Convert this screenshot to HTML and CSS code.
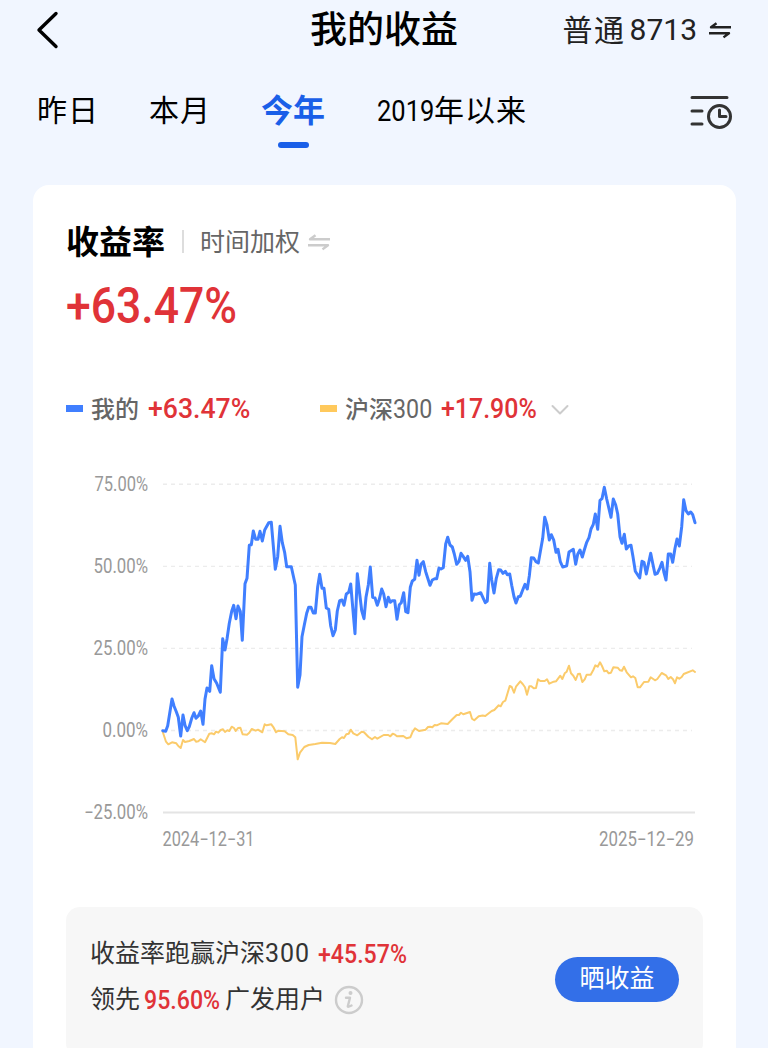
FILE: index.html
```html
<!DOCTYPE html>
<html lang="zh-CN">
<head>
  <meta charset="UTF-8" />
  <meta name="viewport" content="width=device-width, initial-scale=1.0"/>
  <title>我的收益</title>
  <link rel="stylesheet" href="styles.css">
</head>
<body>
  <header>
    <a class="back" aria-label="返回">
      <svg width="24" height="40" viewBox="0 0 24 40"><path d="M21 3.500 L4 20 L21 36.500"/></svg>
    </a>
    <h1>我的收益</h1>
    <div class="account">
      <span class="account-type">普通</span>
      <span class="account-no">8713</span>
      <svg class="swap" width="24" height="18" viewBox="0 0 24 18"><path d="M23 6.300H3L8.500 2.200M1 12.300H21L15.500 16.400"/></svg>
    </div>
  </header>

  <nav>
    <ul>
      <li>昨日</li>
      <li>本月</li>
      <li class="active">今年</li>
      <li class="since"><span class="num">2019</span>年以来</li>
    </ul>
    <svg class="history" width="44" height="36" viewBox="0 0 44 36">
      <path d="M3 3.500H38M3 17H13M3 30H13"/>
      <circle cx="30.500" cy="22.500" r="11"/>
      <path d="M30.500 16V22.500H37"/>
    </svg>
  </nav>

  <main class="card">
    <div class="card-title">
      <h2>收益率</h2>
      <span class="divider"></span>
      <span class="method">时间加权</span>
      <svg class="swap" width="24" height="18" viewBox="0 0 24 18"><path d="M23 6.300H3L8.500 2.200M1 12.300H21L15.500 16.400"/></svg>
    </div>

    <div class="total"><span class="num">+63.47%</span></div>

    <div class="legend">
      <div class="legend-item mine">
        <i class="mark"></i>
        <span class="name">我的</span>
        <span class="num">+63.47%</span>
      </div>
      <div class="legend-item index">
        <i class="mark"></i>
        <span class="name">沪深<b class="num">300</b></span>
        <span class="num rate">+17.90%</span>
        <svg class="chevron" width="18" height="12" viewBox="0 0 18 12"><path d="M1.500 2L9 9.500L16.500 2"/></svg>
      </div>
    </div>

    <svg class="chart" width="636" height="390" viewBox="66 470 636 390">
      <!-- grid -->
      <g class="grid">
        <path d="M163 484.200H692M163 566.400H692M163 648.400H692M163 730.500H692"/>
      </g>
      <path class="axis" d="M163 812.500H695"/>

      <!-- y axis -->
      <g class="label">
        <text x="94.500" y="490.500" textLength="53.500" lengthAdjust="spacingAndGlyphs">75.00%</text>
        <text x="93.500" y="572.700" textLength="54.500" lengthAdjust="spacingAndGlyphs">50.00%</text>
        <text x="93.500" y="654.700" textLength="54.500" lengthAdjust="spacingAndGlyphs">25.00%</text>
        <text x="102.500" y="736.800" textLength="45.500" lengthAdjust="spacingAndGlyphs">0.00%</text>
        <text x="84" y="818.800" textLength="64" lengthAdjust="spacingAndGlyphs">−25.00%</text>
        <!-- x axis -->
        <text x="162.500" y="845.500" textLength="92" lengthAdjust="spacingAndGlyphs">2024−12−31</text>
        <text x="599" y="845.500" textLength="95" lengthAdjust="spacingAndGlyphs">2025−12−29</text>
      </g>

      <polyline class="line-index" points="162.7,731.7 166,741.7 168.3,744.3 172,742.3 176.3,743.3 178.3,746 180.7,748 183,740 185,742 189.3,741 194,739 196,741.7 198.3,741.3 200.7,739.3 205,742.3 209.3,733.7 212,733.3 214,734.3 216,731.7 218.3,732.7 220.7,730 223,729.3 225,732 227.3,730.3 229.3,731 231.7,726.7 234,728 235.7,731 238,728 240.3,727.7 242.7,734.3 247,734.7 249.3,732.7 251.7,729 255.7,730.7 258,729.7 262.3,732.3 264.7,724.3 266.7,725.3 271.3,724.3 273.7,727.7 276,732.3 278.3,730.7 284.7,731.3 288.3,734.3 292.7,735 295.3,737.3 297.7,759.3
        300,752.7 304.3,747 308.7,745 315.3,744 322,742.7 330,743 335.3,744 339.7,739 342,737.3 344,738 346.3,734.3 348.7,733.7 350.7,729.7 353.3,733.3 357.3,735.3 361.7,731.7 364,732.3 368.3,736.7 372,739.3 375,737 377.3,738.7 383.7,735 388.3,735 390.3,736.3 392.7,733.7 395,734.7 397,736.3 403.3,736 406.7,738.3 410.3,737.3 412.7,731.7 415,728.3 419,731 425.7,729.7 428,727 430,726.7 432.3,727.3 434.7,725 436.7,725.3 441,723.3 447.7,724 452.3,719.3 456.7,715 459,715 461,712.7 463.3,714.3 470,712 472,718.7 474.3,720.3 478.7,716.3 482.7,715.5 485.3,716
        491.7,711 494.3,710 498.7,705.3 500.7,706.3 503,702 505.3,700.7 509.7,686 511.7,687 514,692.7 516,686.7 520.3,681.3 522.7,684 525,687.3 527,694.7 529.3,686.3 531.3,686.3 533.7,688.3 536,688 538,679.3 540.3,681 544.7,681 547,679.3 549.3,683.7 553.7,681.7 556,681.3 560.3,675.7 562.3,679 564.7,673.3 566.7,671.7 569,665.7 571,673.3 573.3,675.7 575.7,680 578,674 580,673.7 582.3,682 584.7,679.3 586.7,674.7 590.7,674.7 593.3,670 595.3,665.3 597.7,666.7 600,662.3 602,666 604.3,671.3 606.7,670.7 608.7,673.3 611,672.7 613.3,667.3 617.7,667.7 620,670.3 622,670.7 624,666.7 626.7,672.3 631,677.3 633,676.3 635.3,678 637.7,687.3 640,687.3 644,682 648.3,681.7 650.7,677.3 655,680.3 657.3,679 661.7,673 666,675.3 668.3,679 670.7,677 673,679.3 675,683.3 677,677.3 679.3,678.7 681.7,677 683.7,674 692.7,670.3 695,672"/>

      <polyline class="line-mine" points="162.7,730.7 165.7,731.3 167.7,725.7 172,699 174,706 176.3,711.7 178.3,717.3 180.7,736 183,715 185,725.3 187.3,730.7 189.3,726.7 191.7,718.3 194,712.7 196,718.3 198.3,716 200.7,711 203,724.3 205,699 207,688 209.7,691.3 211.7,665.7 214,678.7 216.7,683.3 220.3,692.3 222.7,638.7 225,650 227,639 229.3,623.3 231.7,611.3 233.7,605.3 236,618.7 238,606 240.3,611.3 242.3,640.3 245,583.7 247,578.3 249.3,545.3 251.3,544.7 253.3,531 255.7,539.3 258,539.3 260,531.3 262.3,541 264.7,530 268.7,522.7 271.3,522.3 275.3,569.3 277.7,556.7 280,526.3 282.3,542.7 284.7,552.7 286.7,566.7 291.3,566.7 295.3,585 297.7,687.3
        300,675 302,636.7 304.3,625 306.7,613.3 308.7,607.3 311,607.3 313.3,613 315.3,613 317.7,586.7 319.7,574.3 322,588.3 324,588.3 326.3,608 328.7,609.3 330.7,626 333,635.7 335.3,630 337.3,611 339.7,600.7 342,600 344,605.3 346.3,594 348.7,592.3 350.7,584 355,633.7 357.3,573.7 359.7,594 361.7,610.7 364,618.7 366,597.3 368.3,585 370.3,567 372.7,597.3 375,598 377.3,605.3 379.3,599.3 381.7,589 383.7,594 386,606.7 388.3,597.3 390.3,602.3 392.3,600.7 394.7,600.7 397,619.3 399.3,604.7 401.3,602.7 403.7,592.7 405.7,611.7 408,612.7 410.3,587.3 412.3,581 414.7,579.3 417,560.3 419,575.3 421,564.3 423.3,561.7 425.7,571.7 430,585.3 432.3,580 434.7,578.7 436.7,578.7 439,568 441,569 443.3,567.7 445.7,544 447.7,537.3 450,545 452.3,547 454.3,554 456.7,564.3 459,561.3 461,553.3 463.3,556.7 465.7,560.3 467.7,556.3 470,571.7 472,600.3 474,594 476.3,594.3 480.7,592.7 483.3,598.3 485.3,602.7 487.3,601
        489.7,563.3 491.7,580 494,593 496.3,578.3 498.7,569.7 500.7,570 503,573.3 505.3,571.3 507.3,574.7 509.7,574 511.7,585.3 514,596.7 516,603 518.3,596.7 520.3,596.3 522.7,590 525,584.3 527.3,589 529.3,576 531.3,557.7 533.7,558 536,561.7 538.3,563 540.3,551.7 542.7,538.3 544.7,517.3 547,525 549.3,540 551.3,534.7 553.7,540 556,552.3 558,549.3 560.3,561.7 562.7,567 566.7,565.7 569,552 573.3,549.3 575.7,564.3 577.7,554.3 580,550 582.3,557 584.3,550 586.7,542.3 589,537.7 591,529 593.3,524.3 595.3,514 597.7,529.3 600,500.3 602,498.7 604.3,487.3 606.7,499 611,517.3 613.3,499 615.7,505 617.7,514 620,536.7 622,543.3 624.3,534.3 626.3,549 628.7,546 631,545.3 633,556.7 635.3,571.3 639.7,578 642,561.3 644,562.3 646.3,574 650.7,553.3 652.7,563.3 655,574.3 657.3,573.3 659.7,568.3 662,562.3 664,572.7 666,580 668.3,554 670.7,554 672.7,562.3 675,548.3 677,539 679.3,546 681.7,526.7 683.7,499.7 686,510.7 688.3,514 690.7,512 692.7,514.7 695,522.7"/>
    </svg>

    <section class="summary">
      <div class="summary-text">
        <p><span>收益率跑赢沪深<b class="digits">300</b></span><span class="num beat">+45.57%</span></p>
        <p>
          <span>领先</span><span class="num rank">95.60%</span><span>广发用户</span>
          <svg class="info" width="30" height="30" viewBox="0 0 30 30">
            <circle cx="15" cy="15" r="13"/>
            <circle class="dot" cx="16.500" cy="8" r="2"/>
            <path d="M12 12.800H16L13.800 21.200Q13.800 22.500 17.500 20.500"/>
          </svg>
        </p>
      </div>
      <button>晒收益</button>
    </section>
  </main>
</body>
</html>
```
FILE: styles.css
```css
* {
  margin: 0;
  padding: 0;
  box-sizing: border-box;
}

body {
  width: 768px;
  height: 1048px;
  overflow: hidden;
  background: #f1f6ff;
  color: #000;
  font-family: Roboto, "Noto Sans CJK SC", sans-serif;
}

svg {
  display: block;
  flex: none;
  fill: none;
  stroke-linecap: round;
  stroke-linejoin: round;
}

/* Narrow digits, every use sets its own width and --sx */
.num {
  display: inline-block;
  white-space: nowrap;
  transform: scaleX(var(--sx));
  transform-origin: left center;
}

/* Top bar */
header {
  display: grid;
  grid-template-columns: 1fr auto 1fr;
  align-items: center;
  height: 58px;
  padding: 0 36px 0 35px;
}
.back svg {
  stroke: #000;
  stroke-width: 3.4;
}
h1 {
  padding: 3px 0 0 1px;
  font-size: 37px;
  font-weight: 500;
  line-height: 56px;
}
.account {
  display: flex;
  align-items: center;
  justify-content: flex-end;
  color: #222;
  font-size: 30px;
  line-height: 56px;
}
.account-type {
  padding-top: 3px;
  letter-spacing: 1.5px;
  margin-right: 4px;
}
.account-no {
  padding-top: 1px;
  margin-right: 11px;
}
.swap {
  stroke: #222;
  stroke-width: 2.4;
  stroke-linecap: butt;
}

/* Tabs */
nav {
  display: flex;
  justify-content: space-between;
  padding: 31px 35px 0 37px;
  height: 127px;
}
nav ul {
  display: flex;
  list-style: none;
  font-size: 30px;
  line-height: 44px;
}
nav li {
  width: 112px;
  letter-spacing: 1px;
  white-space: nowrap;
}
nav .active {
  width: 116px;
  color: #1a5fe8;
  font-size: 32px;
  font-weight: 700;
  letter-spacing: 0;
}
nav .active::after {
  content: "";
  display: block;
  width: 31px;
  height: 6px;
  margin: 9px 0 0 17px;
  border-radius: 3px;
  background: #1a5fe8;
}
.since .num {
  --sx: 0.85;
  width: 57px;
  letter-spacing: 0;
}
.history {
  margin-top: 5px;
  stroke: #333;
  stroke-width: 3;
}

/* Card */
.card {
  width: 703px;
  height: 900px;
  margin-left: 33px;
  padding: 33px 33px 0;
  border-radius: 16px;
  background: #fff;
}
.card-title {
  display: flex;
  align-items: center;
  height: 46px;
}
h2 {
  padding-top: 3px;
  font-size: 33px;
  font-weight: 700;
  line-height: 46px;
}
.divider {
  width: 2px;
  height: 23px;
  margin: 0 16px 0 17px;
  background: #ddd;
}
.method {
  padding-top: 3px;
  color: #666;
  font-size: 25px;
  line-height: 46px;
}
.card-title .swap {
  margin: 2px 0 0 7px;
  stroke: #ccc;
}
.total {
  height: 84px;
  color: #e03338;
  font-size: 50px;
  font-weight: 500;
  line-height: 84px;
}
.total .num {
  --sx: 0.89;
}

/* Legend */
.legend {
  display: flex;
  height: 44px;
  margin-top: 38px;
}
.legend-item {
  display: flex;
  align-items: center;
  font-size: 24px;
  line-height: 44px;
}
.mine {
  width: 254px;
}
.mark {
  width: 17px;
  height: 7px;
  margin-top: 1px;
  margin-right: 8px;
  background: #407fff;
}
.index .mark {
  background: #ffc95c;
}
.name {
  padding-top: 3px;
  color: #666;
  font-weight: 500;
  margin-right: 9px;
}
.name .num {
  --sx: 0.93;
  width: 39px;
  font-size: 25px;
  font-weight: 400;
}
.legend-item > .num {
  --sx: 0.95;
  width: 102px;
  padding-top: 2px;
  color: #e03338;
  font-size: 28px;
  font-weight: 500;
}
.legend-item > .rate {
  --sx: 0.89;
  width: 95px;
}
.chevron {
  margin: 4px 0 0 15px;
  stroke: #ccc;
  stroke-width: 2;
}

/* Chart */
.chart {
  margin-top: 40px;
}
.grid {
  stroke: #ececec;
  stroke-width: 1.4;
  stroke-dasharray: 4 4;
  stroke-linecap: butt;
}
.axis {
  stroke: #e4e4e4;
  stroke-width: 2;
  stroke-linecap: butt;
}
.label {
  fill: #999;
  font-size: 19.5px;
}
.line-mine {
  stroke: #407fff;
  stroke-width: 3;
}
.line-index {
  stroke: #fbcb6b;
  stroke-width: 2;
}

/* Summary */
.summary {
  display: flex;
  align-items: center;
  justify-content: space-between;
  height: 150px;
  margin-top: 47px;
  padding: 0 24px 6px;
  border-radius: 14px;
  background: #f7f7f7;
}
.summary-text {
  margin-top: -5px;
}
.summary p {
  display: flex;
  align-items: center;
  height: 46px;
  color: #333;
  font-size: 25px;
  line-height: 46px;
}
.digits {
  font-weight: 400;
  letter-spacing: 1px;
}
.summary .num {
  --sx: 0.89;
  color: #e03338;
  font-size: 26px;
  font-weight: 500;
}
.beat {
  margin-left: 8px;
}
.rank {
  width: 77px;
  margin: 0 4px;
}
.info {
  margin-left: 9px;
  stroke: #ccc;
  stroke-width: 2.4;
}
.info .dot {
  fill: #ccc;
  stroke: none;
}
button {
  width: 124px;
  height: 45px;
  border: none;
  border-radius: 23px;
  background: #336fe8;
  color: #fff;
  font-family: inherit;
  font-size: 25px;
  line-height: 44px;
  padding-bottom: 1px;
}
```
